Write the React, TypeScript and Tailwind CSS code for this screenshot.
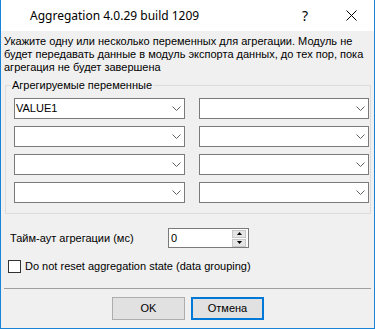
import React from "react";

const font = { fontFamily: '"Liberation Sans", Arial, sans-serif' };

function Chevron() {
  return (
    <svg width="9" height="5" viewBox="0 0 9 5" className="block">
      <path d="M0.5 0.5 L4.5 4.5 L8.5 0.5" fill="none" stroke="#606060" strokeWidth="1" />
    </svg>
  );
}

function Combo({ value, w }: { value?: string; w: string }) {
  return (
    <div className={`${w} h-[21px] bg-white border border-[#7a7a7a] flex items-center`}>
      <span className="flex-1 pl-[1px] text-[11px] leading-[13px] text-black">{value ?? ""}</span>
      <span className="pr-[3px] flex items-center">
        <Chevron />
      </span>
    </div>
  );
}

export default function App() {
  const rows = [0, 1, 2, 3];
  return (
    <div
      className="w-[375px] h-[329px] flex flex-col border-l border-r border-b border-[#1883d7] bg-[#f0f0f0] text-black overflow-hidden"
      style={font}
    >
      {/* Title bar */}
      <div className="h-[31px] bg-white flex items-center shrink-0">
        <span className="pl-[29px] text-[12px] leading-[15px] text-black" style={{ fontFamily: '"Noto Sans", "Liberation Sans", sans-serif' }}>
          Aggregation 4.0.29 build 1209
        </span>
        <div className="ml-auto flex h-full">
          <div className="w-[46px] h-full flex items-center justify-center text-[14px] text-black" style={{ fontFamily: '"Noto Sans", sans-serif' }}>
            ?
          </div>
          <div className="w-[46px] h-full flex items-center justify-center">
            <svg width="11" height="11" viewBox="0 0 11 11">
              <path d="M0.5 0.5 L10.5 10.5 M10.5 0.5 L0.5 10.5" stroke="#000" strokeWidth="1" fill="none" />
            </svg>
          </div>
        </div>
      </div>

      {/* Body */}
      <div className="flex-1 flex flex-col bg-[#f0f0f0]">
        <p className="pl-[3px] pt-[4px] text-[11px] leading-[13px] text-black">
          Укажите одну или несколько переменных для агрегации. Модуль не
          <br />
          будет передавать данные в модуль экспорта данных, до тех пор, пока
          <br />
          агрегация не будет завершена
        </p>

        <fieldset className="ml-[4px] mt-[5px] w-[366px] border border-[#dcdcdc] p-0 m-0">
          <legend className="ml-[5px] px-[1px] text-[11px] leading-[13px] text-black">Агрегируемые переменные</legend>
          <div className="grid grid-cols-[171px_170px] gap-x-[14px] gap-y-[7px] pl-[8px] pt-[6px] pb-[10px]">
            {rows.map((r) => (
              <React.Fragment key={r}>
                <Combo w="w-[171px]" value={r === 0 ? "VALUE1" : undefined} />
                <Combo w="w-[170px]" />
              </React.Fragment>
            ))}
          </div>
        </fieldset>

        {/* Timeout */}
        <div className="mt-[14px] flex items-center pl-[9px]">
          <span className="w-[158px] text-[11px] leading-[13px]">Тайм-аут агрегации (мс)</span>
          <div className="w-[81px] h-[20px] bg-white border border-[#7a7a7a] flex items-center">
            <span className="flex-1 pl-[2px] text-[11px] leading-[13px]">0</span>
            <div className="flex flex-col gap-[1px] pr-[2px]">
              <div className="w-[14px] h-[8px] bg-[#e5e5e5] border border-[#c8c8c8] flex items-center justify-center">
                <svg width="5" height="3" viewBox="0 0 5 3"><path d="M0 3 L2.5 0 L5 3 Z" fill="#000" /></svg>
              </div>
              <div className="w-[14px] h-[8px] bg-[#e5e5e5] border border-[#c8c8c8] flex items-center justify-center">
                <svg width="5" height="3" viewBox="0 0 5 3"><path d="M0 0 L5 0 L2.5 3 Z" fill="#000" /></svg>
              </div>
            </div>
          </div>
        </div>

        {/* Checkbox */}
        <div className="mt-[12px] flex items-center pl-[7px] h-[13px]">
          <div className="w-[13px] h-[13px] bg-white border border-[#333333]" />
          <span className="ml-[4px] text-[11px] leading-[13px]">Do not reset aggregation state (data grouping)</span>
        </div>

        {/* Separator */}
        <div className="mt-[15px] ml-[3px] w-[367px] h-px bg-[#a0a0a0]" />

        {/* Buttons */}
        <div className="mt-[8px] flex justify-center gap-[6px] pl-[1px]">
          <div className="w-[73px] h-[23px] bg-[#e1e1e1] border border-[#adadad] flex items-center justify-center text-[11px]">
            OK
          </div>
          <div className="w-[73px] h-[23px] bg-[#e1e1e1] border-2 border-[#0078d7] flex items-center justify-center text-[11px]">
            Отмена
          </div>
        </div>
      </div>
    </div>
  );
}
